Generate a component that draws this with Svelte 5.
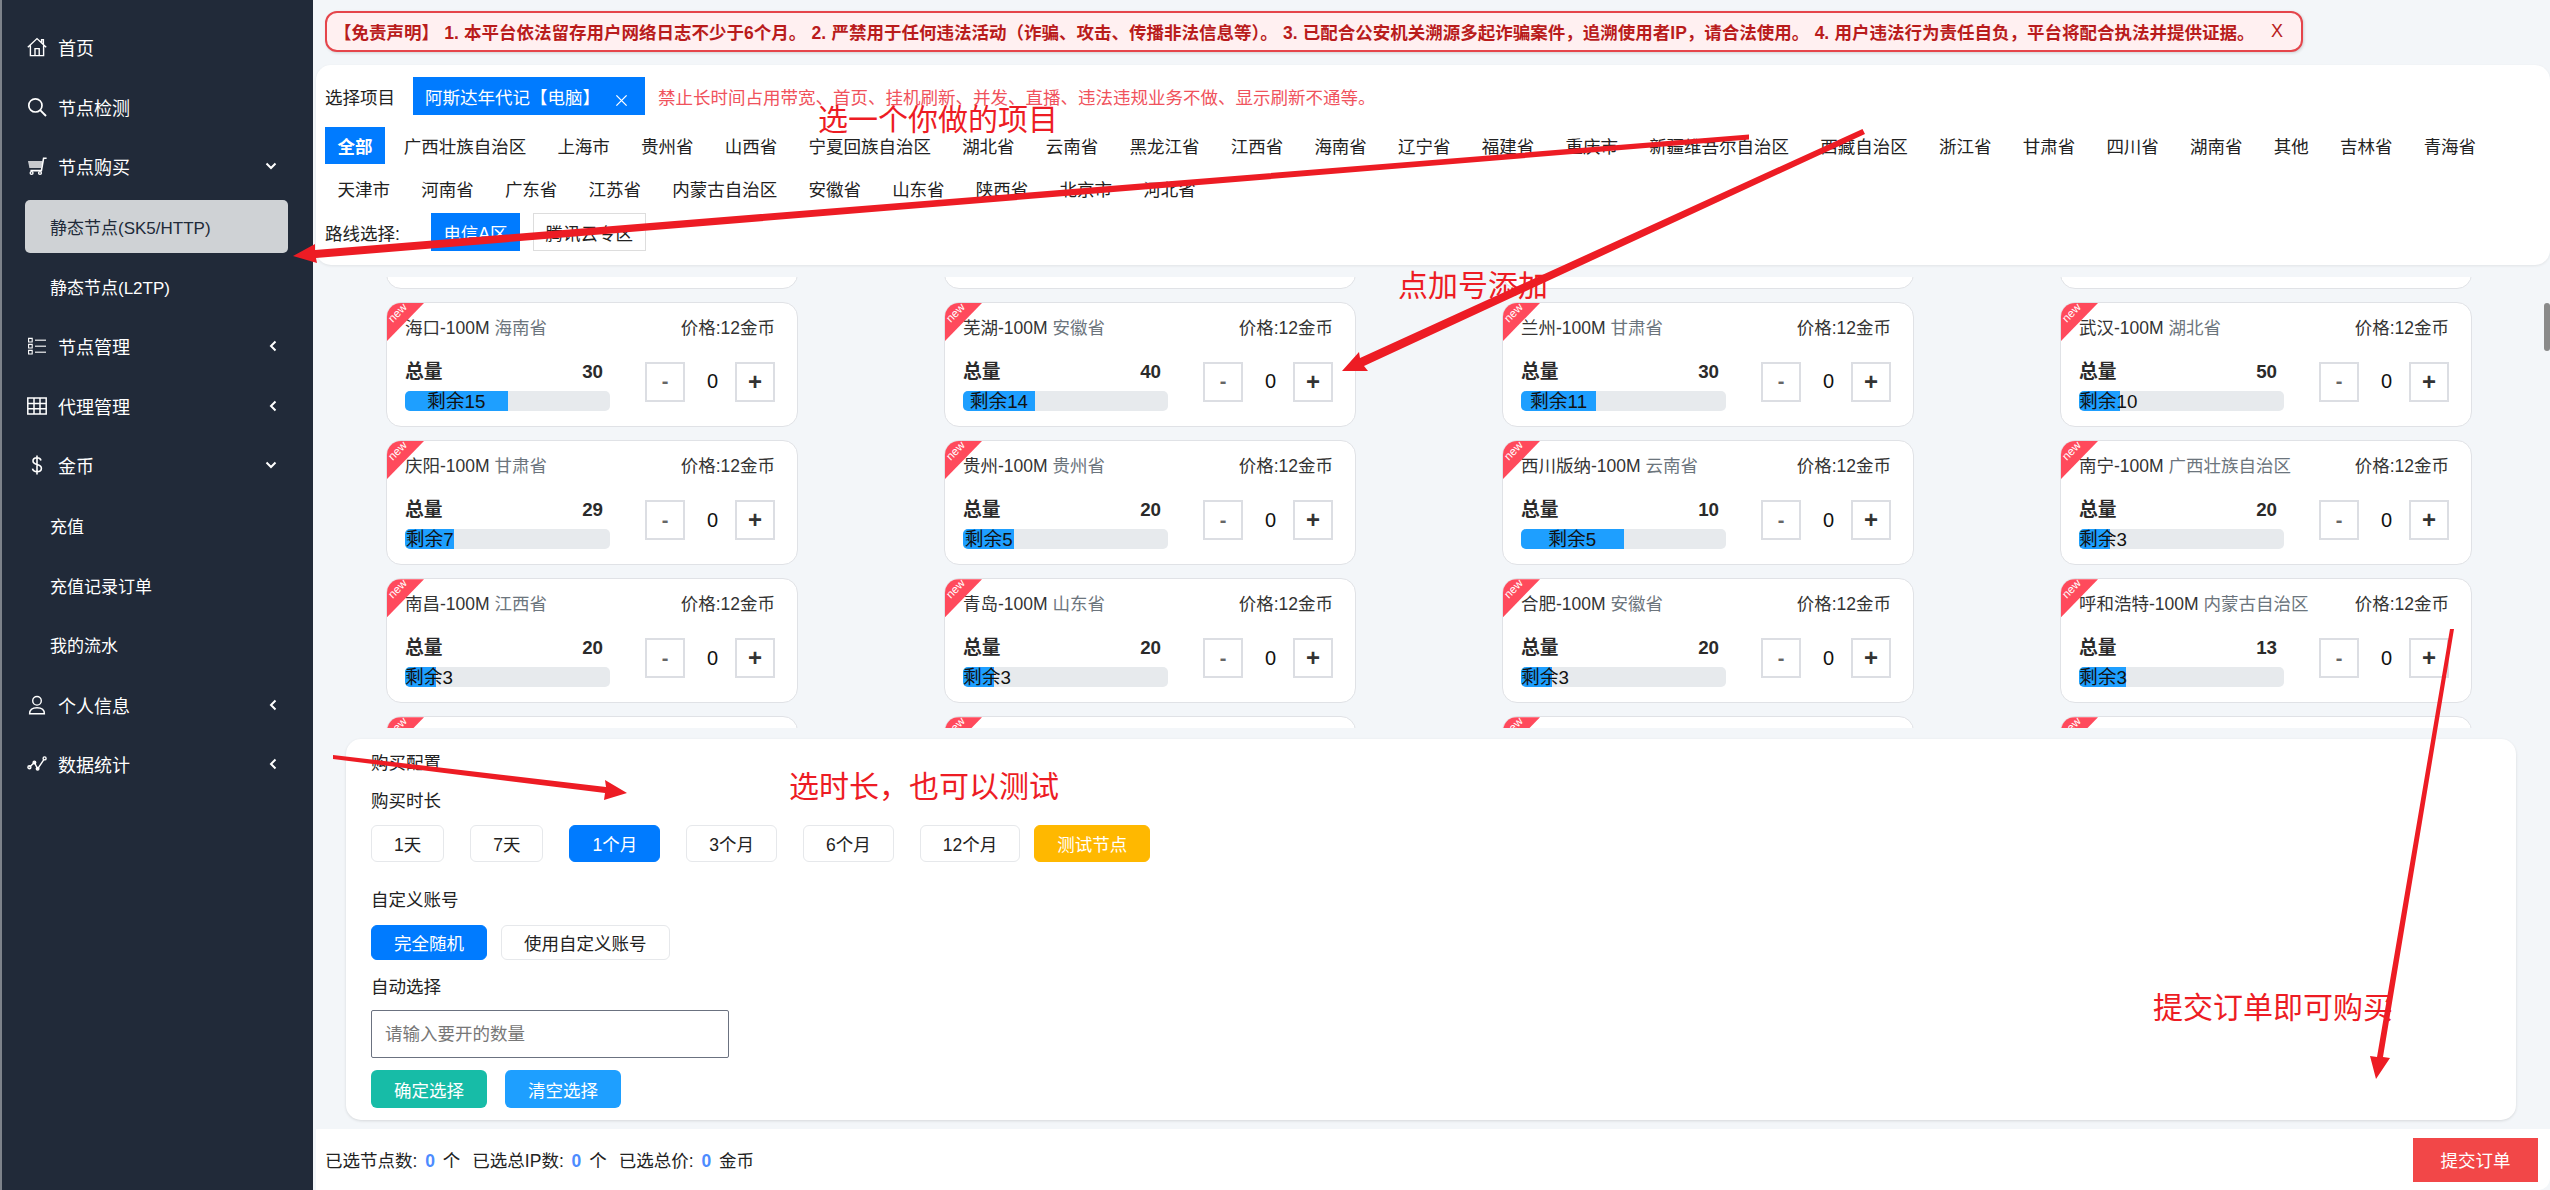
<script>
  // top level menu; sub items sit under their parent
  const nav = [
    { label: '首页', icon: 'home' },
    { label: '节点检测', icon: 'search' },
    { label: '节点购买', icon: 'cart', arrow: 'down', subs: [{ label: '静态节点(SK5/HTTP)', active: true }, { label: '静态节点(L2TP)' }] },
    { label: '节点管理', icon: 'list', arrow: 'left' },
    { label: '代理管理', icon: 'grid', arrow: 'left' },
    { label: '金币', icon: 'dollar', arrow: 'down', subs: [{ label: '充值' }, { label: '充值记录订单' }, { label: '我的流水' }] },
    { label: '个人信息', icon: 'user', arrow: 'left' },
    { label: '数据统计', icon: 'chart', arrow: 'left' }
  ];

  const provinces = [
    '广西壮族自治区', '上海市', '贵州省', '山西省', '宁夏回族自治区', '湖北省', '云南省', '黑龙江省', '江西省',
    '海南省', '辽宁省', '福建省', '重庆市', '新疆维吾尔自治区', '西藏自治区', '浙江省', '甘肃省', '四川省',
    '湖南省', '其他', '吉林省', '青海省', '天津市', '河南省', '广东省', '江苏省', '内蒙古自治区', '安徽省',
    '山东省', '陕西省', '北京市', '河北省'
  ];

  // first row is scrolled away, last row only just shows its ribbon
  const above = [{ above: true }, { above: true }, { above: true }, { above: true }];
  const below = [{}, {}, {}, {}];
  const nodes = [
    ...above,
    { city: '海口', prov: '海南省', total: 30, left: 15 },
    { city: '芜湖', prov: '安徽省', total: 40, left: 14 },
    { city: '兰州', prov: '甘肃省', total: 30, left: 11 },
    { city: '武汉', prov: '湖北省', total: 50, left: 10 },
    { city: '庆阳', prov: '甘肃省', total: 29, left: 7 },
    { city: '贵州', prov: '贵州省', total: 20, left: 5 },
    { city: '西川版纳', prov: '云南省', total: 10, left: 5 },
    { city: '南宁', prov: '广西壮族自治区', total: 20, left: 3 },
    { city: '南昌', prov: '江西省', total: 20, left: 3 },
    { city: '青岛', prov: '山东省', total: 20, left: 3 },
    { city: '合肥', prov: '安徽省', total: 20, left: 3 },
    { city: '呼和浩特', prov: '内蒙古自治区', total: 13, left: 3 },
    ...below
  ];

  const durations = ['1天', '7天', '1个月', '3个月', '6个月', '12个月'];

  // hand drawn tutorial arrows on top of the page
  const arrows = [
    '1749,134.5 315,250 315,244 293,256 317,263 316,258 1749,139.5',
    '1862.5,129 1360,358 1359,352 1342,371 1368,371 1364,366 1865,134',
    '333,755 606,787 605,780 627,793 604,800 605,793 333,759',
    '2450,629 2377,1057 2370,1056 2376,1079 2390,1058 2383,1057 2454,629'
  ];
</script>

{#snippet icon(name)}
  <svg class="icon" viewBox="0 0 20 20" fill="none" stroke="currentColor" stroke-width="1.4">
    {#if name === 'home'}
      <path d="M.8 10.2 10 1.6l9.2 8.6M3.4 8.4V18.6h13.2V8.4M8 18.6v-7h4.2v7M14.6 6V2.6h1.8v5" />
    {:else if name === 'search'}
      <circle cx="8.4" cy="8.4" r="6.6" stroke-width="1.7" />
      <path d="M13.2 13.2 19 19" stroke-width="1.9" />
    {:else if name === 'cart'}
      <path d="M19.6 2.2h-3l-2.2 12.4H3.4" stroke-width="1.6" />
      <path d="M1 5h14.6l-1.2 7H2.4z" fill="currentColor" fill-opacity=".75" stroke="none" />
      <circle cx="4.6" cy="17" r="1.4" />
      <circle cx="13" cy="17" r="1.4" />
    {:else if name === 'list'}
      <path d="M1.6 2.4h3.6V6H1.600zM1.600 8.400h3.600v3.600H1.600zM1.600 14.400h3.600V18H1.600z" stroke-width="1.100" />
      <path d="M8 4.200h11M8 10.200h11M8 16.200h11" opacity=".75" />
    {:else if name === 'grid'}
      <path d="M.8 2h18.400v16H.8zM.8 7.400h18.400M.8 12.700h18.400M7 2v16M13 2v16" stroke-width="1.500" />
    {:else if name === 'dollar'}
      <path d="M14 5.400C13.400 3.400 11.800 2.800 10 2.800c-2.400 0-4 1.200-4 3.300 0 2 1.600 2.800 4 3.400 2.600.7 4.400 1.500 4.400 3.700 0 2.200-1.800 3.500-4.400 3.500-2.300 0-4-1-4.500-3.100M10 .4v19.200" stroke-width="1.600" />
    {:else if name === 'user'}
      <circle cx="10" cy="5.800" r="4.300" />
      <path d="M2.600 18.700c0-3.900 2.800-6 7.400-6s7.400 2.100 7.400 6z" />
    {:else if name === 'chart'}
      <path d="M2.400 13.200 7.400 8.400l3.200 6.400 6.600-9.600" />
      <circle cx="2.400" cy="13.200" r="1.500" />
      <circle cx="7.400" cy="8.400" r="1.300" />
      <circle cx="10.600" cy="14.800" r="1.300" />
      <circle cx="17.600" cy="4.400" r="1.500" />
    {/if}
  </svg>
{/snippet}

<div class="page">
  <aside class="sidebar">
    {#each nav as item}
      <div class="nav-item">
        {@render icon(item.icon)}
        <span>{item.label}</span>
        {#if item.arrow === 'down'}
          <svg class="chev down" viewBox="0 0 12 8"><path d="M1.500 1.500 6 6l4.500-4.500" /></svg>
        {:else if item.arrow === 'left'}
          <svg class="chev left" viewBox="0 0 8 12"><path d="M6.500 1.500 2 6l4.500 4.500" /></svg>
        {/if}
      </div>
      {#if item.subs}
        {#each item.subs as sub}
          <div class="sub-item" class:active={sub.active}>{sub.label}</div>
        {/each}
      {/if}
    {/each}
  </aside>

  <main class="main">
    <div class="notice">
      <span>【免责声明】 1. 本平台依法留存用户网络日志不少于6个月。 2. 严禁用于任何违法活动（诈骗、攻击、传播非法信息等）。 3. 已配合公安机关溯源多起诈骗案件，追溯使用者IP，请合法使用。 4. 用户违法行为责任自负，平台将配合执法并提供证据。</span>
      <em>X</em>
    </div>

    <section class="filters">
      <div class="project-row">
        <span>选择项目</span>
        <div class="project-tag">
          阿斯达年代记【电脑】
          <svg viewBox="0 0 14 14"><path d="M1.500 1.500 12.500 12.500M12.500 1.500 1.500 12.500" /></svg>
        </div>
        <span class="warn">禁止长时间占用带宽、首页、挂机刷新、并发、直播、违法违规业务不做、显示刷新不通等。</span>
      </div>
      <div class="provinces">
        <span class="prov selected">全部</span>
        {#each provinces as p}
          <span class="prov">{p}</span>
        {/each}
      </div>
      <div class="route-row">
        <span class="route-label">路线选择:</span>
        <span class="route on">电信A区</span>
        <span class="route">腾讯云专区</span>
      </div>
    </section>

    <div class="node-scroll">
      <div class="node-grid">
        {#each nodes as n}
          <div class="card">
            {#if !n.above}
              <div class="ribbon"><i>new</i></div>
            {/if}
            {#if n.city}
              <div class="card-head">
                <span>{n.city}-100M <small>{n.prov}</small></span>
                <span>价格:12金币</span>
              </div>
              <div class="card-body">
                <div class="stock">
                  <div class="stock-top"><b>总量</b><b>{n.total}</b></div>
                  <div class="bar">
                    <div class="fill" style:width="{(n.left / n.total) * 100}%">剩余{n.left}</div>
                  </div>
                </div>
                <div class="stepper">
                  <span class="step minus">-</span>
                  <span class="count">0</span>
                  <span class="step plus">+</span>
                </div>
              </div>
            {/if}
          </div>
        {/each}
      </div>
      <div class="thumb"></div>
    </div>

    <section class="config">
      <div class="cfg-title">购买配置</div>
      <div class="cfg-label first">购买时长</div>
      <div class="durations">
        {#each durations as d}
          <span class="btn" class:primary={d === '1个月'}>{d}</span>
        {/each}
        <span class="btn amber">测试节点</span>
      </div>
      <div class="cfg-label custom">自定义账号</div>
      <div class="accounts">
        <span class="btn primary">完全随机</span>
        <span class="btn">使用自定义账号</span>
      </div>
      <div class="cfg-label auto">自动选择</div>
      <input class="qty" placeholder="请输入要开的数量" />
      <div class="actions">
        <span class="btn solid green">确定选择</span>
        <span class="btn solid sky">清空选择</span>
      </div>
    </section>

    <footer class="footer">
      <div class="summary">
        <span>已选节点数: <b>0</b> 个</span>
        <span>已选总IP数: <b>0</b> 个</span>
        <span>已选总价: <b>0</b> 金币</span>
      </div>
      <span class="submit">提交订单</span>
    </footer>
  </main>

  <!-- tutorial marks drawn over the screenshot -->
  <svg class="marks" viewBox="0 0 2550 1190">
    {#each arrows as pts}
      <polygon points={pts} />
    {/each}
  </svg>
  <span class="note n1">选一个你做的项目</span>
  <span class="note n2">点加号添加</span>
  <span class="note n3">选时长，也可以测试</span>
  <span class="note n4">提交订单即可购买</span>
</div>

<style>
  :global(body) {
    margin: 0;
    font-family: "Liberation Sans", "Noto Sans CJK SC", sans-serif;
  }

  .page {
    position: relative;
    display: flex;
    width: 2550px;
    height: 1190px;
    overflow: hidden;
    background: #f3f6f9;
    font-size: 17.5px;
    color: #222;
  }

  /* sidebar */
  .sidebar {
    flex: none;
    display: flex;
    flex-direction: column;
    box-sizing: border-box;
    width: 313px;
    padding-top: 17px;
    border-left: 2px solid #7d828a;
    background: #212a39;
    color: #fff;
  }
  .nav-item {
    display: flex;
    align-items: center;
    gap: 11px;
    height: 59.8px;
    padding-left: 25px;
    font-size: 18px;
  }
  .icon {
    flex: none;
    width: 20px;
    height: 20px;
  }
  .chev {
    fill: none;
    stroke: #fff;
    stroke-width: 2;
    margin-left: auto;
  }
  .chev.down {
    width: 12px;
    height: 8px;
    margin-right: 36px;
  }
  .chev.left {
    width: 8px;
    height: 12px;
    margin-right: 36px;
  }
  .sub-item {
    display: flex;
    align-items: center;
    box-sizing: border-box;
    width: 263px;
    height: 53px;
    margin: 3.4px 0 3.4px 23px;
    padding-left: 25px;
    border-radius: 5px;
    font-size: 17px;
  }
  .sub-item.active {
    background: #cfd2d5;
    color: #212a39;
  }

  .main {
    flex: 1;
    min-width: 0;
    display: flex;
    flex-direction: column;
  }

  /* disclaimer */
  .notice {
    align-self: flex-start;
    box-sizing: border-box;
    display: flex;
    align-items: center;
    justify-content: space-between;
    width: 1978px;
    height: 41px;
    margin: 11px 0 0 12px;
    padding: 0 18px 0 7px;
    border: 2px solid #e5454b;
    border-radius: 12px;
    background: #fff0f1;
    box-shadow: 1px 1px 3px rgba(0, 0, 0, 0.15);
    color: #b91c1c;
    font-weight: 700;
    white-space: nowrap;
    word-spacing: 0.4px;
  }
  .notice em {
    font-style: normal;
    font-weight: 400;
    font-size: 18px;
  }

  /* filter panel */
  .filters {
    box-sizing: border-box;
    height: 200px;
    margin: 13px 0 0 3px;
    padding: 12px 9px 0;
    border-radius: 15px;
    background: #fff;
    box-shadow: 0 1px 3px rgba(0, 0, 0, 0.08);
  }
  .project-row {
    display: flex;
    align-items: center;
    height: 38px;
    gap: 18px;
  }
  .project-tag {
    display: flex;
    align-items: center;
    box-sizing: border-box;
    width: 232px;
    height: 38px;
    padding-left: 12px;
    background: #007bff;
    color: #fff;
    margin-right: -5px;
  }
  .project-tag svg {
    width: 13px;
    height: 13px;
    margin: 8px 0 0 15px;
    fill: none;
    stroke: #fff;
    stroke-width: 1.400;
  }
  .warn {
    color: #f0525c;
  }
  .provinces {
    display: flex;
    flex-wrap: wrap;
    gap: 6px 6.200px;
    margin-top: 12px;
  }
  .prov {
    display: flex;
    align-items: center;
    height: 37px;
    padding: 0 12.500px;
  }
  .prov.selected {
    background: #007bff;
    color: #fff;
    font-weight: 700;
  }
  .route-row {
    display: flex;
    align-items: center;
    margin-top: 6px;
  }
  .route-label {
    margin-right: 31px;
  }
  .route {
    display: flex;
    align-items: center;
    height: 38px;
    box-sizing: border-box;
    padding: 0 11.500px;
    margin-right: 13px;
    border: 1px solid #ddd;
  }
  .route.on {
    background: #007bff;
    border-color: #007bff;
    color: #fff;
  }

  /* node cards */
  .node-scroll {
    position: relative;
    flex: none;
    height: 451px;
    margin-top: 12px;
    overflow: hidden;
  }
  .node-grid {
    display: grid;
    grid-template-columns: repeat(4, 558px);
    justify-items: center;
    row-gap: 13.400px;
    margin-top: -113.100px;
  }
  .card {
    position: relative;
    box-sizing: border-box;
    width: 412px;
    height: 124.700px;
    padding: 13px 22px 0 18px;
    border: 1px solid #e0e2e6;
    border-radius: 15px;
    background: #fff;
    overflow: hidden;
  }
  .ribbon {
    position: absolute;
    left: 0;
    top: 0;
    width: 37px;
    height: 38px;
    background: #ff4a5c;
    clip-path: polygon(0 0, 100% 0, 0 100%);
  }
  .ribbon i {
    position: absolute;
    left: 0;
    top: 3px;
    width: 20px;
    font-style: normal;
    font-size: 11.500px;
    line-height: 14px;
    text-align: center;
    color: #fff;
    transform: rotate(-45deg);
  }
  .card-head {
    position: relative;
    display: flex;
    justify-content: space-between;
    line-height: 24px;
    color: #333;
  }
  .card-head small {
    font-size: inherit;
    color: #6c757d;
  }
  .card-body {
    display: flex;
    gap: 35px;
    margin-top: 21px;
  }
  .stock {
    width: 205px;
  }
  .stock-top {
    display: flex;
    justify-content: space-between;
    padding-right: 7px;
    font-size: 18.750px;
    line-height: 22px;
    color: #2b2b2b;
  }
  .bar {
    height: 20px;
    margin-top: 8px;
    border-radius: 5px;
    background: #e7eaed;
    overflow: hidden;
  }
  .fill {
    height: 100%;
    background: #1e9fff;
    color: #111;
    font-size: 18.750px;
    line-height: 21px;
    text-align: center;
    white-space: nowrap;
  }
  .stepper {
    display: flex;
    align-items: center;
    height: 40px;
    margin-top: 1px;
  }
  .step {
    display: flex;
    align-items: center;
    justify-content: center;
    box-sizing: border-box;
    width: 40px;
    height: 40px;
    border: 2px solid #dcdee3;
    font-weight: 700;
    color: #444;
  }
  .step.plus {
    font-size: 24px;
    color: #333;
  }
  .step.minus {
    font-size: 20px;
    color: #666;
  }
  .count {
    box-sizing: border-box;
    width: 50px;
    padding-left: 5px;
    text-align: center;
    font-size: 20px;
    color: #111;
  }
  .thumb {
    position: absolute;
    right: 0;
    top: 26px;
    width: 6px;
    height: 48px;
    border-radius: 3px;
    background: #8a8a8a;
  }

  /* purchase config */
  .config {
    box-sizing: border-box;
    flex: none;
    width: 2170px;
    height: 381px;
    margin: 11px 0 0 33px;
    padding: 14px 25px 0;
    border-radius: 15px;
    background: #fff;
    box-shadow: 0 1px 3px rgba(0, 0, 0, 0.12);
  }
  .cfg-title,
  .cfg-label {
    line-height: 20px;
  }
  .cfg-label.first {
    margin-top: 18px;
  }
  .cfg-label.custom {
    margin-top: 28px;
  }
  .cfg-label.auto {
    margin-top: 17px;
  }
  .durations {
    display: flex;
    gap: 26px;
    margin-top: 14px;
  }
  .btn {
    display: flex;
    align-items: center;
    box-sizing: border-box;
    height: 37px;
    padding: 0 22px;
    border: 1px solid #e6e8eb;
    border-radius: 6px;
    background: #fff;
    white-space: nowrap;
  }
  .btn.primary {
    background: #007bff;
    border-color: #007bff;
    color: #fff;
  }
  .btn.amber {
    margin-left: -12px;
    background: #ffb800;
    border-color: #ffb800;
    color: #fff;
  }
  .accounts {
    display: flex;
    gap: 14px;
    margin-top: 15px;
  }
  .accounts .btn {
    height: 35px;
  }
  .qty {
    display: block;
    box-sizing: border-box;
    width: 358px;
    height: 48px;
    margin-top: 13px;
    padding: 0 13px;
    border: 1px solid #6b7280;
    border-radius: 2px;
    font: inherit;
    outline: none;
  }
  .qty::placeholder {
    color: #777;
  }
  .actions {
    display: flex;
    gap: 18px;
    margin-top: 12px;
  }
  .btn.solid {
    height: 38px;
    padding: 0 23px;
    border: 0;
    color: #fff;
  }
  .btn.green {
    background: #17bca7;
  }
  .btn.sky {
    background: #1e9fff;
  }

  /* footer */
  .footer {
    display: flex;
    align-items: center;
    justify-content: space-between;
    box-sizing: border-box;
    flex: 1;
    margin: 9px 0 0 3px;
    padding: 0 12px 0 9px;
    border-bottom-right-radius: 12px;
    background: #fff;
  }
  .summary {
    display: flex;
    gap: 12px;
  }
  .summary b {
    margin: 0 3px;
    color: #4d8cff;
  }
  .submit {
    display: flex;
    align-items: center;
    padding: 0 27.500px;
    height: 44px;
    background: #f24748;
    color: #fff;
  }

  /* annotations */
  .marks {
    position: absolute;
    left: 0;
    top: 0;
    width: 2550px;
    height: 1190px;
    fill: #ed1c24;
    stroke: none;
  }
  .note {
    position: absolute;
    font-size: 30px;
    line-height: 40px;
    color: #ed1c24;
    white-space: nowrap;
  }
  .n1 {
    left: 818px;
    top: 100px;
  }
  .n2 {
    left: 1398px;
    top: 266px;
  }
  .n3 {
    left: 789px;
    top: 767px;
  }
  .n4 {
    left: 2153px;
    top: 988px;
  }
</style>
